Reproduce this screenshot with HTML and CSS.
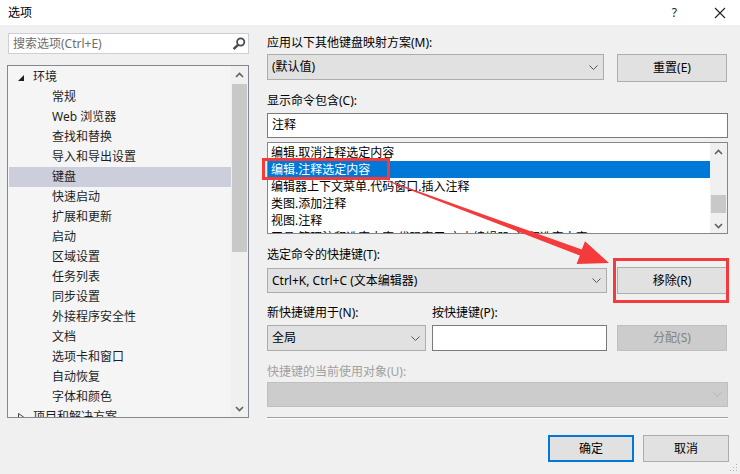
FILE: index.html
```html
<!DOCTYPE html>
<html lang="zh-CN">
  <head>
    <meta charset="UTF-8" />
    <title>选项</title>
    <link rel="stylesheet" href="styles.css">
  </head>
  <body>
    <div class="window">
      <div class="titlebar">
        <span class="title">选项</span>
        <span class="help">?</span>
        <svg class="close" width="12" height="12" viewBox="0 0 12 12"><path d="M1 1L11 11M11 1L1 11" stroke="#222" stroke-width="1.1" fill="none"/></svg>
      </div>

      <div class="content">
        <div class="side">
          <div class="search">
            <span class="placeholder">搜索选项(Ctrl+E)</span>
            <svg class="magnifier" width="14" height="14" viewBox="0 0 14 14"><circle cx="8.7" cy="5" r="3.6" stroke="#4a4a4a" stroke-width="1.8" fill="none"/><path d="M6.2 7.6L1.6 12.2" stroke="#4a4a4a" stroke-width="2.4"/></svg>
          </div>
          <div class="tree">
            <ul class="tree-list">
              <li class="tree-item top"><svg class="tri" width="6" height="6" viewBox="0 0 6 6"><polygon points="6,0 6,6 0,6" fill="#1e1e1e"/></svg>环境</li>
              <li class="tree-item">常规</li>
              <li class="tree-item">Web 浏览器</li>
              <li class="tree-item">查找和替换</li>
              <li class="tree-item">导入和导出设置</li>
              <li class="tree-item selected">键盘</li>
              <li class="tree-item">快速启动</li>
              <li class="tree-item">扩展和更新</li>
              <li class="tree-item">启动</li>
              <li class="tree-item">区域设置</li>
              <li class="tree-item">任务列表</li>
              <li class="tree-item">同步设置</li>
              <li class="tree-item">外接程序安全性</li>
              <li class="tree-item">文档</li>
              <li class="tree-item">选项卡和窗口</li>
              <li class="tree-item">自动恢复</li>
              <li class="tree-item">字体和颜色</li>
              <li class="tree-item top"><svg class="tri" width="6" height="8" viewBox="0 0 6 8"><polygon points="0.5,0.5 5.5,4 0.5,7.5" fill="none" stroke="#404040"/></svg>项目和解决方案</li>
            </ul>
            <div class="vscroll tree-scroll">
              <svg class="arrow" width="9" height="6" viewBox="0 0 9 6"><polyline points="1,5 4.5,1.5 8,5" stroke="#606060" stroke-width="1.6" fill="none"/></svg>
              <div class="thumb tree-thumb"></div>
              <div class="spacer"></div>
              <svg class="arrow" width="9" height="6" viewBox="0 0 9 6"><polyline points="1,1 4.5,4.5 8,1" stroke="#606060" stroke-width="1.6" fill="none"/></svg>
            </div>
          </div>
        </div>

        <div class="main">
          <div class="label">应用以下其他键盘映射方案(M):</div>
          <div class="row row-scheme">
            <div class="combo combo-scheme">
              <span>(默认值)</span>
              <svg class="chev" width="9" height="5" viewBox="0 0 9 5"><polyline points="0.5,0.5 4.5,4.5 8.5,0.5" stroke="#555" fill="none"/></svg>
            </div>
            <div class="btn">重置(E)</div>
          </div>

          <div class="label gap-label">显示命令包含(C):</div>
          <div class="textbox search-cmd">注释</div>

          <div class="listbox">
            <ul class="cmd-list">
              <li class="cmd">编辑.取消注释选定内容</li>
              <li class="cmd selected">编辑.注释选定内容</li>
              <li class="cmd">编辑器上下文菜单.代码窗口.插入注释</li>
              <li class="cmd">类图.添加注释</li>
              <li class="cmd">视图.注释</li>
              <li class="cmd">工具.管理注释选定内容.代码窗口(文本编辑器).注释选定内容</li>
            </ul>
            <div class="vscroll list-scroll">
              <svg class="arrow" width="9" height="6" viewBox="0 0 9 6"><polyline points="1,5 4.5,1.5 8,5" stroke="#606060" stroke-width="1.6" fill="none"/></svg>
              <div class="spacer"></div>
              <div class="thumb list-thumb"></div>
              <svg class="arrow" width="9" height="6" viewBox="0 0 9 6"><polyline points="1,1 4.5,4.5 8,1" stroke="#606060" stroke-width="1.6" fill="none"/></svg>
            </div>
          </div>

          <div class="label gap-label-lg">选定命令的快捷键(T):</div>
          <div class="row row-shortcut">
            <div class="combo combo-shortcut">
              <span>Ctrl+K, Ctrl+C (文本编辑器)</span>
              <svg class="chev" width="9" height="5" viewBox="0 0 9 5"><polyline points="0.5,0.5 4.5,4.5 8.5,0.5" stroke="#555" fill="none"/></svg>
            </div>
            <div class="btn btn-short">移除(R)</div>
          </div>

          <div class="row row-labels">
            <div class="label label-scope">新快捷键用于(N):</div>
            <div class="label">按快捷键(P):</div>
          </div>
          <div class="row row-new">
            <div class="combo combo-scope">
              <span>全局</span>
              <svg class="chev" width="9" height="5" viewBox="0 0 9 5"><polyline points="0.5,0.5 4.5,4.5 8.5,0.5" stroke="#555" fill="none"/></svg>
            </div>
            <div class="textbox keybox"></div>
            <div class="btn btn-disabled">分配(S)</div>
          </div>

          <div class="label label-disabled">快捷键的当前使用对象(U):</div>
          <div class="combo combo-disabled">
            <span></span>
            <svg class="chev" width="9" height="5" viewBox="0 0 9 5"><polyline points="0.5,0.5 4.5,4.5 8.5,0.5" stroke="#b4b4b4" fill="none"/></svg>
          </div>

          <div class="separator"></div>

          <div class="footer">
            <div class="btn btn-footer btn-default">确定</div>
            <div class="btn btn-footer">取消</div>
          </div>
        </div>
      </div>

      <svg class="grip" width="8" height="8" viewBox="0 0 8 8">
        <rect x="6" y="0" width="1" height="1" fill="#b0b0b0"/>
        <rect x="3" y="3" width="1" height="1" fill="#b0b0b0"/>
        <rect x="6" y="3" width="1" height="1" fill="#b0b0b0"/>
        <rect x="0" y="6" width="1" height="1" fill="#b0b0b0"/>
        <rect x="3" y="6" width="1" height="1" fill="#b0b0b0"/>
        <rect x="6" y="6" width="1" height="1" fill="#b0b0b0"/>
      </svg>

      <!-- red annotation marks drawn over the dialog -->
      <svg class="marks" width="740" height="474" viewBox="0 0 740 474">
        <rect x="263.5" y="159.5" width="125" height="19" fill="none" stroke="#f43a3a" stroke-width="3"/>
        <rect x="614.5" y="259.5" width="113" height="42" fill="none" stroke="#f43a3a" stroke-width="3"/>
        <polygon points="388.2,180.4 581.8,249.6 585,241.3 609,263 576.6,263.9 579.8,255.4 387.8,181.6" fill="#f43a3a"/>
      </svg>
    </div>
  </body>
</html>
```

FILE: styles.css
```css
* {
  box-sizing: border-box;
}
ul,
li {
  list-style: none;
  padding: 0;
  margin: 0;
}
body {
  margin: 0;
  font-family: "Noto Sans", "Noto Sans CJK SC", sans-serif;
  font-size: 12px;
  color: #000;
  background-color: #f0f0f0;
}
.window {
  position: relative;
  width: 740px;
  height: 474px;
  overflow: hidden;
  background-color: #f0f0f0;
}
.titlebar {
  display: flex;
  align-items: center;
  height: 25px;
  padding-left: 8px;
  background-color: #fff;
  line-height: 16px;
}
.titlebar .title {
  flex: 1;
}
.titlebar .help {
  margin-right: 37px;
  color: #222;
}
.titlebar .close {
  margin-right: 14px;
}
.content {
  display: flex;
}

/* left column */
.side {
  width: 249px;
  padding: 8px 0 0 7px;
}
.search {
  display: flex;
  align-items: center;
  justify-content: space-between;
  width: 241px;
  height: 21px;
  margin-left: 1px;
  padding: 0 2px 0 4px;
  border: 1px solid #ccced8;
  background-color: #fff;
  color: #6d6d6d;
  line-height: 16px;
}
.tree {
  display: flex;
  width: 242px;
  height: 353px;
  margin-top: 11px;
  border: 1px solid #828790;
  background-color: #f5f5f5;
}
.tree-list {
  flex: 1;
  overflow: hidden;
  padding: 1px 0 0 1px;
}
.tree-item {
  height: 20px;
  line-height: 20px;
  padding-left: 43px;
  color: #1e1e1e;
  white-space: nowrap;
}
.tree-item.top {
  padding-left: 9px;
}
.tree-item .tri {
  margin-right: 9px;
}
.tree-item.selected {
  background-color: #cccedb;
}
.vscroll {
  display: flex;
  flex-direction: column;
  align-items: center;
  width: 17px;
  background-color: #f0f0f0;
}
.vscroll .arrow {
  flex: none;
  margin: 6px 0 5px;
}
.vscroll .spacer {
  flex: 1;
}
.thumb {
  flex: none;
  width: 15px;
  background-color: #c8c8c8;
}
.tree-thumb {
  height: 168px;
  margin-top: 1px;
}
.list-thumb {
  height: 18px;
  margin-bottom: 4px;
}

/* right column */
.main {
  width: 461px;
  margin-left: 18px;
  padding-top: 10px;
}
.label {
  height: 16px;
  line-height: 16px;
  white-space: nowrap;
}
.row {
  display: flex;
}
.combo {
  display: flex;
  align-items: center;
  justify-content: space-between;
  height: 26px;
  padding: 0 5px 0 4px;
  border: 1px solid #adadad;
  background-color: #e1e1e1;
  line-height: 16px;
  white-space: nowrap;
}
.btn {
  display: flex;
  align-items: center;
  justify-content: center;
  width: 110px;
  height: 28px;
  border: 1px solid #adadad;
  background-color: #e1e1e1;
  line-height: 16px;
}
.textbox {
  height: 25px;
  padding-left: 4px;
  border: 1px solid #7a7a7a;
  background-color: #fff;
  line-height: 22px;
}
.row-scheme {
  margin-top: 3px;
}
.combo-scheme {
  width: 337px;
  margin-right: 13px;
}
.gap-label {
  margin-top: 11px;
}
.search-cmd {
  margin-top: 4px;
}
.listbox {
  display: flex;
  height: 92px;
  margin-top: 4px;
  border: 1px solid #828790;
  background-color: #fff;
}
.cmd-list {
  flex: 1;
  overflow: hidden;
  padding-top: 1px;
}
.cmd {
  height: 17px;
  line-height: 17px;
  padding-left: 3px;
  white-space: nowrap;
}
.cmd.selected {
  background-color: #0078d7;
  color: #fff;
}
.list-scroll .arrow {
  margin: 6px 0 4px;
}
.gap-label-lg {
  margin-top: 13px;
}
.row-shortcut {
  margin-top: 4px;
}
.combo-shortcut {
  width: 340px;
  height: 25px;
  margin: 1px 10px 0 0;
}
.btn-short {
  height: 27px;
}
.row-labels {
  margin-top: 11px;
}
.label-scope {
  width: 165px;
}
.row-new {
  margin-top: 4px;
}
.combo-scope {
  width: 159px;
  margin-right: 6px;
}
.keybox {
  width: 175px;
  height: 26px;
  margin-right: 10px;
}
.btn-disabled {
  height: 26px;
  border-color: #bfbfbf;
  background-color: #cccccc;
  color: #838383;
}
.label-disabled {
  margin-top: 13px;
  color: #a0a0a0;
}
.combo-disabled {
  height: 25px;
  margin-top: 2px;
  border-color: #bfbfbf;
  background-color: #cccccc;
}
.separator {
  height: 2px;
  margin-top: 10px;
  border-top: 1px solid #a0a0a0;
  border-bottom: 1px solid #fff;
}
.footer {
  display: flex;
  justify-content: flex-end;
  gap: 9px;
  margin: 16px -1px 0 0;
}
.btn-footer {
  width: 86px;
  height: 27px;
}
.btn-default {
  border: 2px solid #0078d7;
}

/* overlays */
.grip {
  position: absolute;
  right: 2px;
  bottom: 2px;
}
.marks {
  position: absolute;
  top: 0;
  left: 0;
  pointer-events: none;
}
```
